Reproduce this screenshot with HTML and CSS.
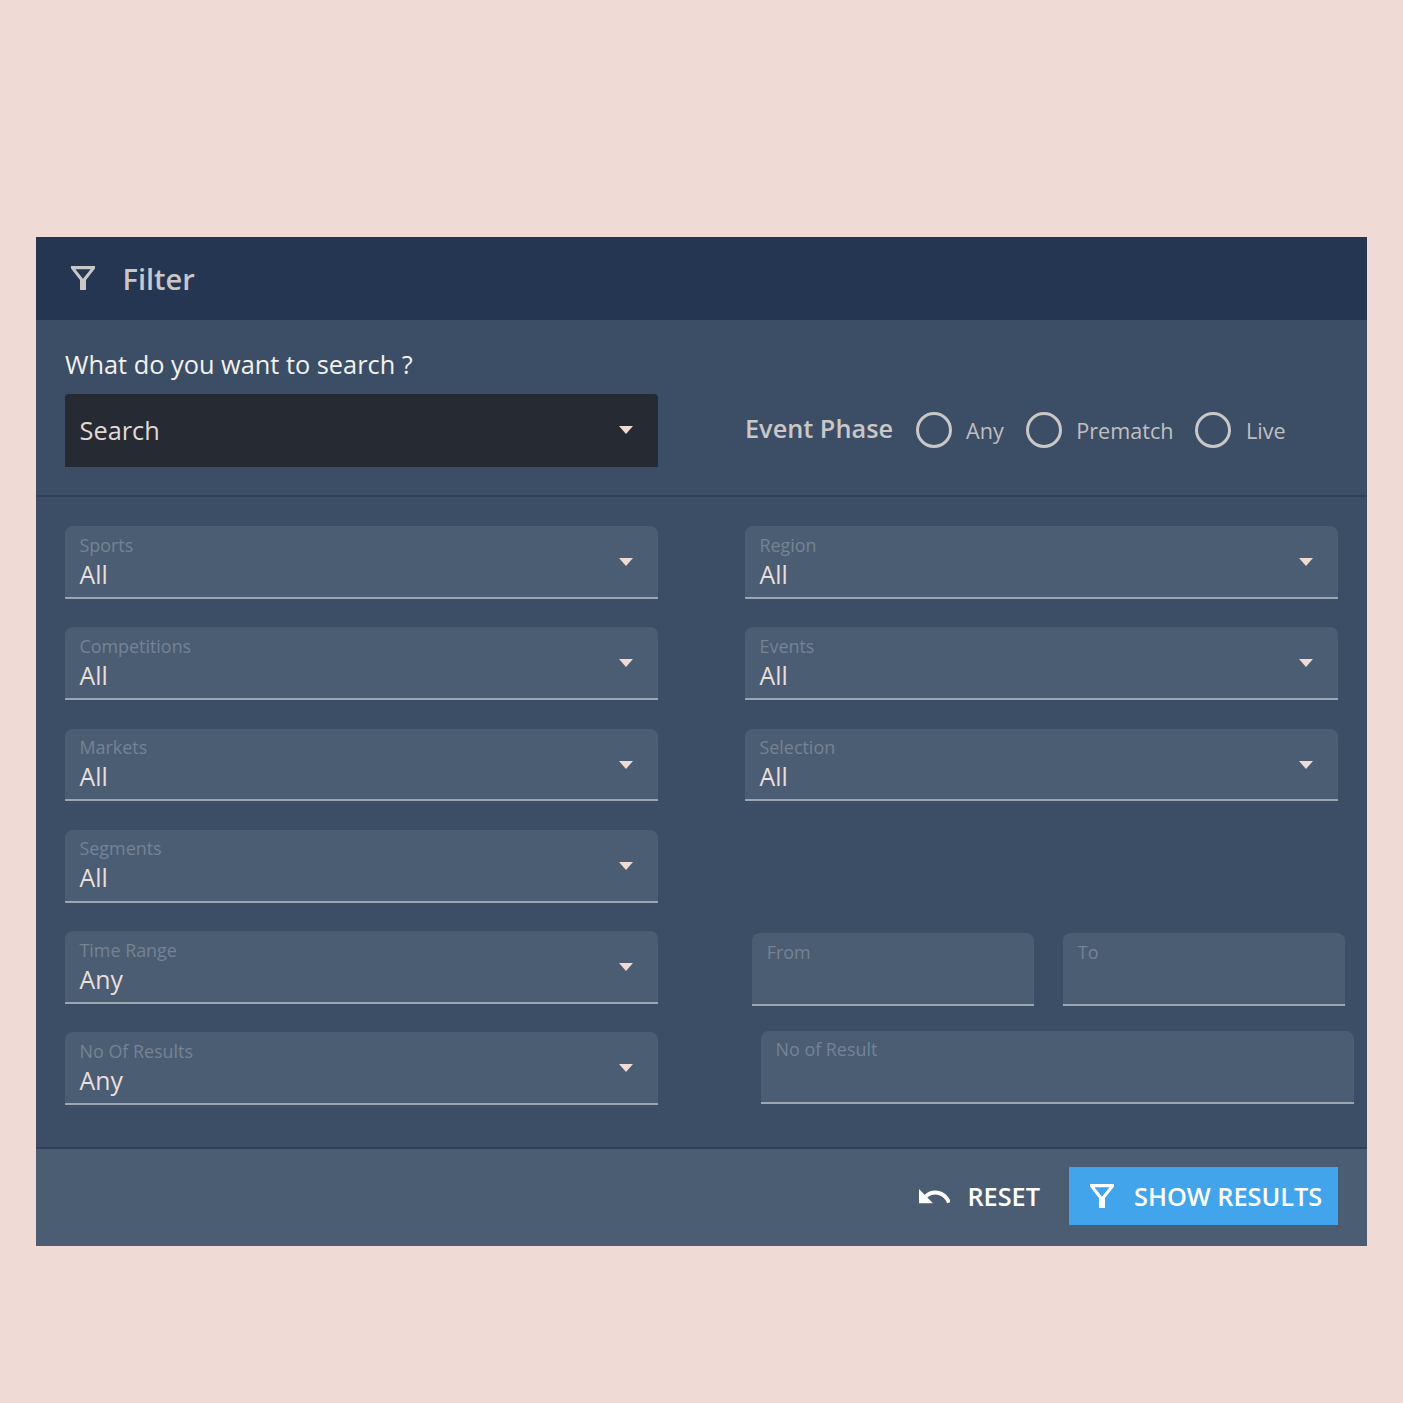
FILE: index.html
```html
<!DOCTYPE html>
<html lang="en">
<head>
<meta charset="utf-8">
<title>Filter</title>
<link rel="stylesheet" href="styles.css">
</head>
<body>
<svg class="defs" width="0" height="0" aria-hidden="true">
  <symbol id="funnel" viewBox="0 0 24 24"><path d="M0 0H24V2.600L15 14V24H9V14L0 2.600Z M4.400 3.200H19.600L12 12.800Z" fill-rule="evenodd"/></symbol>
</svg>
<main class="panel">
  <header class="head">
    <svg class="head-icon"><use href="#funnel"/></svg>
    <h1 class="head-title">Filter</h1>
  </header>
  <section class="top">
    <div class="search-col">
      <label class="search-label">What do you want to search ?</label>
      <div class="search-box"><span>Search</span><i class="caret"></i></div>
    </div>
    <div class="phase">
      <span class="phase-title">Event Phase</span>
      <span class="radio"></span><span class="radio-label">Any</span>
      <span class="radio"></span><span class="radio-label">Prematch</span>
      <span class="radio"></span><span class="radio-label">Live</span>
    </div>
  </section>
  <section class="fields">
    <div class="col">
      <div class="field"><span class="f-label">Sports</span><span class="f-value">All</span><i class="caret"></i></div>
      <div class="field"><span class="f-label">Competitions</span><span class="f-value">All</span><i class="caret"></i></div>
      <div class="field"><span class="f-label">Markets</span><span class="f-value">All</span><i class="caret"></i></div>
      <div class="field"><span class="f-label">Segments</span><span class="f-value">All</span><i class="caret"></i></div>
      <div class="field"><span class="f-label">Time Range</span><span class="f-value">Any</span><i class="caret"></i></div>
      <div class="field"><span class="f-label">No Of Results</span><span class="f-value">Any</span><i class="caret"></i></div>
    </div>
    <div class="col">
      <div class="field"><span class="f-label">Region</span><span class="f-value">All</span><i class="caret"></i></div>
      <div class="field"><span class="f-label">Events</span><span class="f-value">All</span><i class="caret"></i></div>
      <div class="field"><span class="f-label">Selection</span><span class="f-value">All</span><i class="caret"></i></div>
      <div class="spacer"></div>
      <div class="range">
        <div class="field field-date"><span class="f-label">From</span></div>
        <div class="field field-date"><span class="f-label">To</span></div>
      </div>
      <div class="field field-count"><span class="f-label">No of Result</span></div>
    </div>
  </section>
  <footer class="foot">
    <button class="btn-reset" type="button">
      <svg class="reset-icon" viewBox="2 7 20 9.500" preserveAspectRatio="none"><path d="M12.500 8c-2.650 0-5.050.99-6.900 2.600L2 7v9h9l-3.620-3.620c1.390-1.160 3.160-1.880 5.120-1.880 3.540 0 6.550 2.310 7.600 5.500l2.370-.78C21.080 11.030 17.150 8 12.500 8z"/></svg>
      RESET
    </button>
    <button class="btn-show" type="button">
      <svg class="show-icon"><use href="#funnel"/></svg>
      SHOW RESULTS
    </button>
  </footer>
</main>
</body>
</html>
```
FILE: styles.css
```css
* { box-sizing: border-box; }
html, body { margin: 0; padding: 0; }
body {
  width: 1403px;
  height: 1403px;
  background: #f0dad5;
  font-family: "Open Sans", "Liberation Sans", sans-serif;
  padding: 237px 36px 0;
  overflow: hidden;
}
.defs { position: absolute; }
.panel { width: 1331px; height: 1009px; background: #3c4e65; display: flex; flex-direction: column; }

.head { height: 83px; background: #253652; display: flex; align-items: center; padding-left: 35px; flex: none; }
.head-icon { width: 24px; height: 24px; fill: #c9c7c8; margin-right: 28px; margin-top: -2px; }
.head-title { margin: 0 0 0 -0.500px; font-size: 29px; font-weight: 600; color: #c9c7c8; line-height: 1; }

.top { height: 177px; flex: none; border-bottom: 2px solid #2f4058; padding: 27px 29px 0; display: flex; gap: 87px; }
.search-col { width: 593px; }
.search-label { display: block; height: 47px; font-size: 25.350px; line-height: 35px; color: #f4f1f0; }
.search-box { height: 72.500px; background: #252a33; border-radius: 4px 4px 0 0; padding-left: 14.500px; display: flex; align-items: center; position: relative; font-size: 25.350px; color: #e2d9d6; }

.caret { position: absolute; right: 25px; top: 32px; width: 0; height: 0; border-left: 7.500px solid transparent; border-right: 7.500px solid transparent; border-top: 8px solid #f0dad5; }

.phase { display: flex; align-items: center; height: 50px; margin-top: 59px; color: #c9c7c8; }
.phase-title { font-size: 25.300px; font-weight: 600; margin-right: 22.500px; margin-top: -6px; }
.radio { width: 36px; height: 36px; border: 3.500px solid #c9c7c8; border-radius: 50%; margin-right: 14.500px; margin-top: -2px; }
.radio-label { font-size: 21.600px; color: #c0bfc1; margin-right: 22px; margin-top: -2px; }

.fields { flex: 1; padding: 29px 29px 0; display: flex; gap: 87px; border-bottom: 2px solid #2f4058; }
.col { width: 593px; display: flex; flex-direction: column; gap: 28.600px; }
.field { height: 72.700px; flex: none; background: #4b5d73; border-radius: 8px 8px 0 0; border-bottom: 2px solid #9ba6b1; padding: 5.500px 14.500px 0; position: relative; display: flex; flex-direction: column; }
.f-label { font-size: 17.900px; line-height: 27px; color: #758393; }
.f-value { font-size: 24.800px; line-height: 30.500px; color: #eadfdc; }
.spacer { height: 72.700px; flex: none; }
.range { display: flex; gap: 29px; margin-left: 7.300px; margin-top: 2px; height: 72.700px; flex: none; width: 593px; }
.field-date { width: 282px; }
.field-count { width: 593px; margin-left: 16px; margin-top: -3.500px; }

.foot { height: 97px; flex: none; background: #4b5d73; display: flex; justify-content: flex-end; align-items: flex-start; padding: 18px 29px 0 0; }
.foot button { border: 0; font-family: inherit; font-size: 25.300px; font-weight: 600; height: 58px; display: flex; align-items: center; color: #fff; padding: 0; }
.btn-reset { background: none; margin-right: 29px; }
.reset-icon { width: 31px; height: 15px; fill: #fff; margin-right: 17px; margin-left: 1px; }
.btn-show { width: 269px; background: #42a5eb; padding-left: 21px !important; }
.show-icon { width: 24px; height: 24px; fill: #fff; margin-right: 20px; }
```
